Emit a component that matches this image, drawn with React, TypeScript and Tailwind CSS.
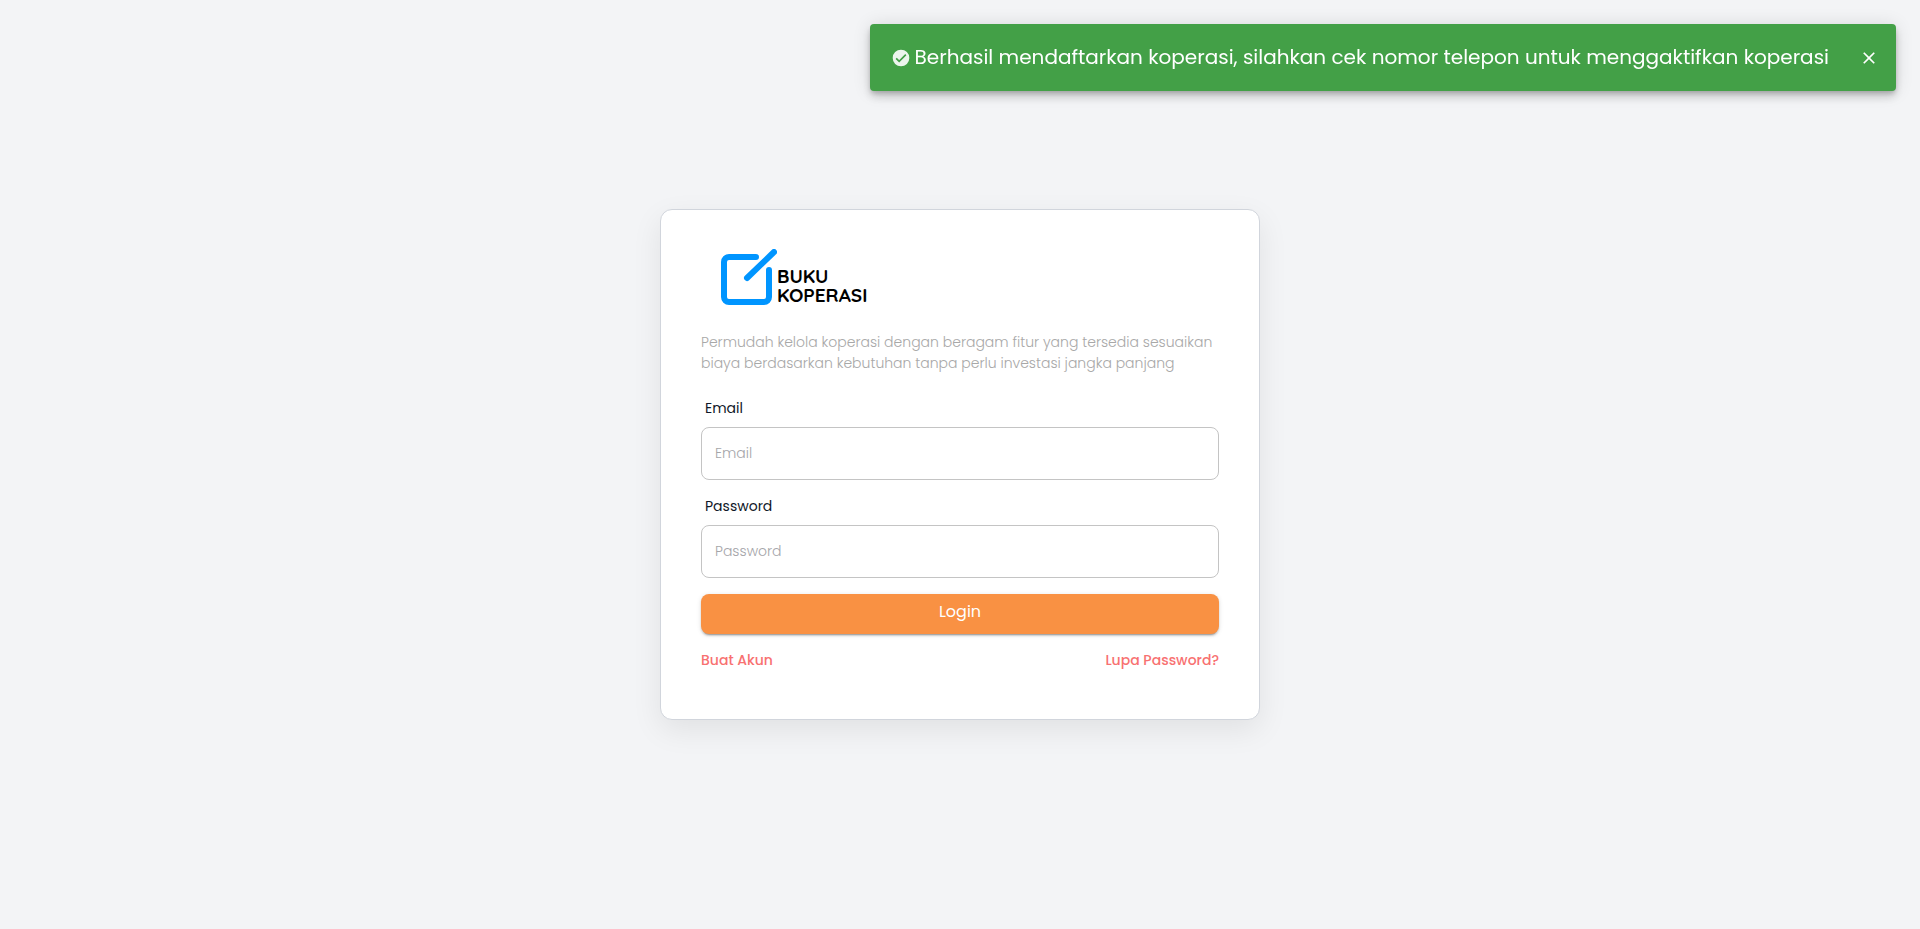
import { useState } from "react";
import { MdClose } from "react-icons/md";

function Logo() {
  return (
    <div className="flex items-end pl-5">
      <svg width="56" height="56" viewBox="0 0 56 56" fill="none" stroke="#0095ff" strokeWidth="6" strokeLinecap="round" strokeLinejoin="round" aria-hidden="true">
        <path d="M35 8H8a5 5 0 0 0-5 5v35a5 5 0 0 0 5 5h35a5 5 0 0 0 5-5V21" />
        <path d="M26 29 53 3" />
      </svg>
      <h1 className="font-['Quicksand','Comfortaa','Poppins',sans-serif] text-[19px] leading-[19px] font-bold text-black">
        <span className="block">BUKU</span>
        <span className="block">KOPERASI</span>
      </h1>
    </div>
  );
}

function CheckIcon() {
  return (
    <svg width="20" height="20" viewBox="0 0 24 24" className="mr-1 opacity-90" aria-hidden="true">
      <circle cx="12" cy="12" r="10" fill="#fff" />
      <path d="M6.2 12.4l3.6 3.6 8-8" fill="none" stroke="#43a047" strokeWidth="2" />
    </svg>
  );
}

function Field({ id, label, type }: { id: string; label: string; type: string }) {
  return (
    <div className="flex flex-col gap-2">
      <label htmlFor={id} className="pl-1 text-sm leading-[21px] text-gray-900">
        {label}
      </label>
      <input
        id={id}
        type={type}
        placeholder={label}
        className="h-[53px] w-full rounded-lg border border-[#c4c4c4] px-[13px] text-sm font-light outline-none placeholder:text-[#a5a5a9]"
      />
    </div>
  );
}

function Notification({ onClose }: { onClose: () => void }) {
  return (
    <div
      role="alert"
      className="fixed top-6 right-6 flex items-center rounded bg-[#43a047] py-5 pr-[17px] pl-[21px] text-white shadow-[0_3px_5px_-1px_rgba(0,0,0,0.2),0_6px_10px_0_rgba(0,0,0,0.14),0_1px_18px_0_rgba(0,0,0,0.12)]"
    >
      <CheckIcon />
      <p className="text-xl leading-[27px]">
        Berhasil mendaftarkan koperasi, silahkan cek nomor telepon untuk menggaktifkan koperasi
      </p>
      <button type="button" aria-label="Close" onClick={onClose} className="ml-[30px] cursor-pointer">
        <MdClose size={20} />
      </button>
    </div>
  );
}

function App() {
  const [open, setOpen] = useState(true);

  return (
    <div className="flex min-h-screen items-center justify-center bg-gray-100 font-['Poppins','Inter',sans-serif]">
      {open && <Notification onClose={() => setOpen(false)} />}
      <main className="w-full max-w-[600px] rounded-xl border border-gray-300 bg-white px-10 pt-[39px] pb-12 shadow-[0_10px_30px_rgba(0,0,0,0.08)]">
        <Logo />
        <p className="mt-[27px] text-sm leading-[21px] font-light text-[#a8a8a8]">
          Permudah kelola koperasi dengan beragam fitur yang tersedia sesuaikan biaya berdasarkan
          kebutuhan tanpa perlu investasi jangka panjang
        </p>
        <form className="mt-6 flex flex-col gap-4" onSubmit={(e) => e.preventDefault()}>
          <Field id="email" label="Email" type="email" />
          <Field id="password" label="Password" type="password" />
          <button
            type="submit"
            className="h-10 w-full cursor-pointer rounded-lg bg-[#f99143] pb-1 text-base text-white shadow-[0_3px_1px_-2px_rgba(0,0,0,0.2),0_2px_2px_0_rgba(0,0,0,0.14),0_1px_5px_0_rgba(0,0,0,0.12)]"
          >
            Login
          </button>
        </form>
        <div className="mt-4 flex justify-between text-sm leading-[21px] font-medium text-[#f87171]">
          <a href="#buat-akun">Buat Akun</a>
          <a href="#lupa-password">Lupa Password?</a>
        </div>
      </main>
    </div>
  );
}

export default App;
